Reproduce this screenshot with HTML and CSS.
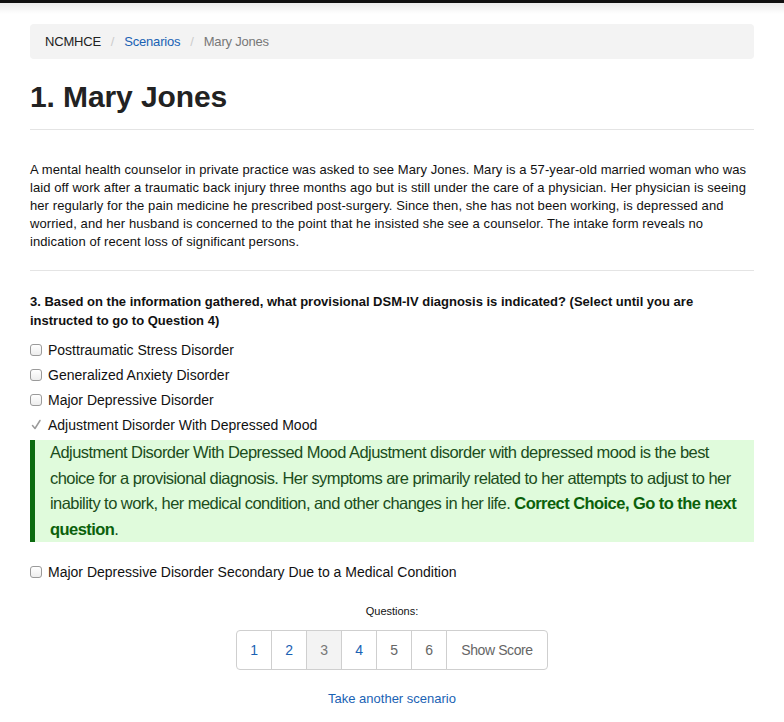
FILE: index.html
```html
<!DOCTYPE html>
<html>
<head>
<meta charset="utf-8">
<link rel="stylesheet" href="styles.css">
</head>
<body>
<div class="topbar"></div>
<div class="container">
  <ol class="breadcrumb">
    <li class="crumb-root">NCMHCE</li>
    <li class="sep">/</li>
    <li><a href="#">Scenarios</a></li>
    <li class="sep">/</li>
    <li class="active">Mary Jones</li>
  </ol>
  <h1 class="title">1. Mary Jones</h1>
  <hr class="rule">
  <p class="story">A mental health counselor in private practice was asked to see Mary Jones. Mary is a 57-year-old married woman who was laid off work after a traumatic back injury three months ago but is still under the care of a physician. Her physician is seeing her regularly for the pain medicine he prescribed post-surgery. Since then, she has not been working, is depressed and worried, and her husband is concerned to the point that he insisted she see a counselor. The intake form reveals no indication of recent loss of significant persons.</p>
  <hr class="rule rule2">
  <p class="question">3. Based on the information gathered, what provisional DSM-IV diagnosis is indicated? (Select until you are instructed to go to Question 4)</p>
  <div class="options">
    <label class="opt"><span class="box"></span>Posttraumatic Stress Disorder</label>
    <label class="opt"><span class="box"></span>Generalized Anxiety Disorder</label>
    <label class="opt"><span class="box"></span>Major Depressive Disorder</label>
    <label class="opt"><span class="box checked"><svg width="12" height="12" viewBox="0 0 12 12"><path d="M2.5 6.5 L5 9.5 L10 1.5" fill="none" stroke="#9a9a9a" stroke-width="1.5" stroke-linecap="round" stroke-linejoin="round"/></svg></span>Adjustment Disorder With Depressed Mood</label>
    <div class="feedback">Adjustment Disorder With Depressed Mood Adjustment disorder with depressed mood is the best choice for a provisional diagnosis. Her symptoms are primarily related to her attempts to adjust to her inability to work, her medical condition, and other changes in her life. <strong>Correct Choice, Go to the next question</strong>.</div>
    <label class="opt opt-last"><span class="box"></span>Major Depressive Disorder Secondary Due to a Medical Condition</label>
  </div>
  <div class="nav">
    <div class="nav-label">Questions:</div>
    <ul class="pager">
      <li><a href="#" class="link">1</a></li>
      <li><a href="#" class="link">2</a></li>
      <li><span class="current">3</span></li>
      <li><a href="#" class="link">4</a></li>
      <li><span class="plain">5</span></li>
      <li><span class="plain">6</span></li>
      <li><span class="plain score">Show Score</span></li>
    </ul>
    <a href="#" class="another">Take another scenario</a>
  </div>
</div>
</body>
</html>
```

FILE: styles.css
```css
* { box-sizing: border-box; }
html, body { margin: 0; padding: 0; background: #fff; }
body {
  font-family: "Liberation Sans", Arial, sans-serif;
  color: #222;
  font-size: 14px;
}
.topbar {
  height: 14px;
  border-top: 3px solid #111;
  background: linear-gradient(#ececec, #fff);
}
.container {
  padding: 10px 30px 0 30px;
}
.breadcrumb {
  list-style: none;
  margin: 0;
  height: 35px;
  padding: 0 15px;
  background: #f3f3f3;
  border-radius: 4px;
  display: flex;
  align-items: center;
  gap: 10px;
  font-size: 13px;
  letter-spacing: -0.2px;
  color: #777;
}
.breadcrumb .crumb-root { color: #222; }
.breadcrumb .sep { color: #ccc; }
.breadcrumb a { color: #1a62b4; text-decoration: none; }
.breadcrumb .active { color: #777; }
.title {
  margin: 21px 0 0 0;
  font-size: 30px;
  line-height: 34px;
  font-weight: bold;
  color: #222;
  letter-spacing: -0.1px;
}
.rule {
  margin: 15px 0 0 0;
  border: 0;
  border-top: 1px solid #e4e4e4;
  height: 0;
}
.story {
  margin: 31px 0 0 0;
  font-size: 13px;
  line-height: 18px;
  color: #111;
  letter-spacing: 0.08px;
}
.rule2 { margin-top: 19px; }
.question {
  margin: 21px 0 0 0;
  font-size: 13px;
  line-height: 19px;
  font-weight: bold;
  color: #111;
}
.options {
  margin-top: 7px;
  display: flex;
  flex-direction: column;
}
.opt {
  display: flex;
  align-items: center;
  height: 25px;
  font-size: 14px;
  color: #111;
}
.box {
  width: 12px;
  height: 12px;
  border: 1px solid #9a9a9a;
  border-radius: 3px;
  background: linear-gradient(#fff, #ededed);
  margin-right: 6px;
  flex: none;
  display: flex;
  align-items: center;
  justify-content: center;
}
.box.checked {
  border: 0;
  background: none;
}
.feedback {
  margin-top: 3px;
  background: #e0fbdc;
  border-left: 5px solid #0c6b10;
  padding: 0 8px 0 15px;
  font-size: 16.5px;
  line-height: 25.5px;
  color: #1b4d1b;
  font-weight: 300;
  letter-spacing: -0.55px;
}
.feedback strong {
  color: #0b610b;
  font-weight: bold;
}
.opt-last { margin-top: 17px; }
.nav {
  display: flex;
  flex-direction: column;
  align-items: center;
}
.nav-label {
  margin-top: 21px;
  font-size: 11px;
  color: #111;
}
.pager {
  list-style: none;
  margin: 13px 0 0 0;
  padding: 0;
  display: flex;
}
.pager li > * {
  display: block;
  height: 40px;
  line-height: 38px;
  min-width: 36px;
  padding: 0 13px;
  border: 1px solid #cfcfcf;
  margin-left: -1px;
  font-size: 14px;
  text-align: center;
  text-decoration: none;
  color: #666;
  background: #fff;
}
.pager li > .score { padding: 0 14px; letter-spacing: -0.4px; }
.pager li:first-child > * { margin-left: 0; border-radius: 4px 0 0 4px; }
.pager li:last-child > * { border-radius: 0 4px 4px 0; }
.pager .link { color: #1a62b4; }
.pager .current { background: #f3f3f3; color: #777; }
.another {
  margin-top: 21px;
  color: #1a62b4;
  text-decoration: none;
  font-size: 13px;
}
```
